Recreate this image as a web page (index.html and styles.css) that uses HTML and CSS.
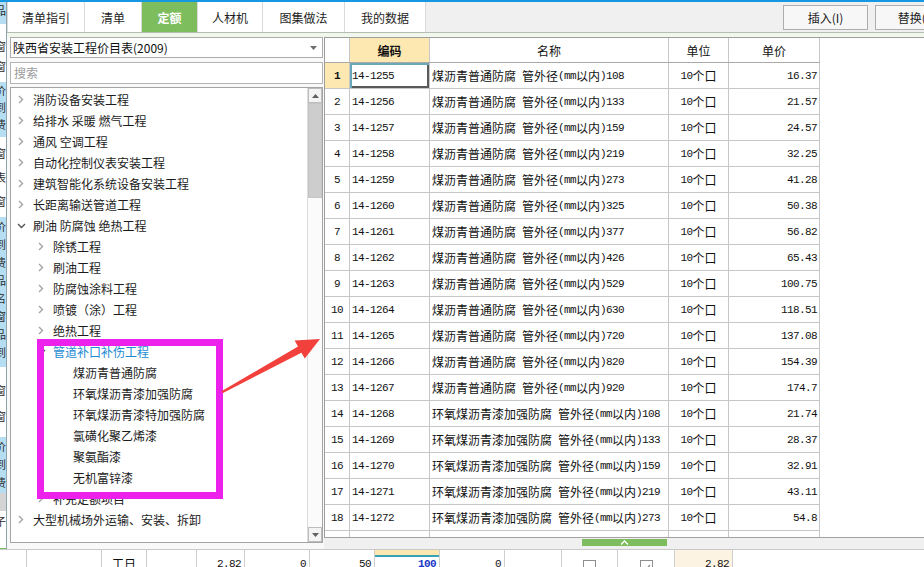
FILE: index.html
```html
<!DOCTYPE html>
<html lang="zh-CN">
<head>
<meta charset="utf-8">
<title>定额查询</title>
<link rel="stylesheet" href="styles.css">
</head>
<body>
<div class="app">
  <div class="upper">
    <div class="edge">
      <div class="seg blue s1"><span>品</span></div>
      <div class="seg s2"><span>窗</span><span>窗</span></div>
      <div class="seg blue s3"><span>价</span><span>到</span><span>费</span></div>
      <div class="seg s4"><span>窗</span><span>表</span><span>窗</span></div>
      <div class="seg blue s5"><span>价</span><span>到</span><span>费</span><span>品</span><span>名</span><span>窗</span><span>品</span><span>到</span></div>
      <div class="seg s6"><span>窗</span><span>窗</span></div>
      <div class="seg blue s7"><span>价</span><span>到</span><span>费</span></div>
      <div class="seg grey s8"></div>
      <div class="seg s9"><span>子</span></div>
    </div>
    <div class="main">
      <div class="topbar">
        <div class="tabs">
          <div class="tab w1">清单指引</div>
          <div class="tab w2">清单</div>
          <div class="tab w3 active">定额</div>
          <div class="tab w4">人材机</div>
          <div class="tab w5">图集做法</div>
          <div class="tab w6">我的数据</div>
        </div>
        <div class="actions">
          <button class="btn">插入(I)</button>
          <button class="btn">替换(R)</button>
        </div>
      </div>
      <div class="gap"></div>
      <div class="content">
        <div class="left">
          <div class="select">
            <span>陕西省安装工程价目表(2009)</span>
            <svg class="caret" width="7" height="4" viewBox="0 0 7 4"><path d="M0 0H7L3.5 4Z" fill="#6d6d6d"/></svg>
          </div>
          <div class="search">搜索</div>
          <div class="tree">
            <ul class="nodes">
              <li class="node l1"><span class="tw"><svg width="6" height="9" viewBox="0 0 6 9"><path d="M1 1L4.5 4.5L1 8" fill="none" stroke="#a3a3a3" stroke-width="1.4"/></svg></span>消防设备安装工程</li>
              <li class="node l1"><span class="tw"><svg width="6" height="9" viewBox="0 0 6 9"><path d="M1 1L4.5 4.5L1 8" fill="none" stroke="#a3a3a3" stroke-width="1.4"/></svg></span>给排水 采暖 燃气工程</li>
              <li class="node l1"><span class="tw"><svg width="6" height="9" viewBox="0 0 6 9"><path d="M1 1L4.5 4.5L1 8" fill="none" stroke="#a3a3a3" stroke-width="1.4"/></svg></span>通风 空调工程</li>
              <li class="node l1"><span class="tw"><svg width="6" height="9" viewBox="0 0 6 9"><path d="M1 1L4.5 4.5L1 8" fill="none" stroke="#a3a3a3" stroke-width="1.4"/></svg></span>自动化控制仪表安装工程</li>
              <li class="node l1"><span class="tw"><svg width="6" height="9" viewBox="0 0 6 9"><path d="M1 1L4.5 4.5L1 8" fill="none" stroke="#a3a3a3" stroke-width="1.4"/></svg></span>建筑智能化系统设备安装工程</li>
              <li class="node l1"><span class="tw"><svg width="6" height="9" viewBox="0 0 6 9"><path d="M1 1L4.5 4.5L1 8" fill="none" stroke="#a3a3a3" stroke-width="1.4"/></svg></span>长距离输送管道工程</li>
              <li class="node l1"><span class="tw"><svg class="down" width="9" height="6" viewBox="0 0 9 6"><path d="M1 1L4.5 4.5L8 1" fill="none" stroke="#555" stroke-width="1.4"/></svg></span>刷油 防腐蚀 绝热工程</li>
              <li class="node l2"><span class="tw"><svg width="6" height="9" viewBox="0 0 6 9"><path d="M1 1L4.5 4.5L1 8" fill="none" stroke="#a3a3a3" stroke-width="1.4"/></svg></span>除锈工程</li>
              <li class="node l2"><span class="tw"><svg width="6" height="9" viewBox="0 0 6 9"><path d="M1 1L4.5 4.5L1 8" fill="none" stroke="#a3a3a3" stroke-width="1.4"/></svg></span>刷油工程</li>
              <li class="node l2"><span class="tw"><svg width="6" height="9" viewBox="0 0 6 9"><path d="M1 1L4.5 4.5L1 8" fill="none" stroke="#a3a3a3" stroke-width="1.4"/></svg></span>防腐蚀涂料工程</li>
              <li class="node l2"><span class="tw"><svg width="6" height="9" viewBox="0 0 6 9"><path d="M1 1L4.5 4.5L1 8" fill="none" stroke="#a3a3a3" stroke-width="1.4"/></svg></span>喷镀（涂）工程</li>
              <li class="node l2"><span class="tw"><svg width="6" height="9" viewBox="0 0 6 9"><path d="M1 1L4.5 4.5L1 8" fill="none" stroke="#a3a3a3" stroke-width="1.4"/></svg></span>绝热工程</li>
              <li class="node l2 sel"><span class="tw"><svg class="down" width="9" height="6" viewBox="0 0 9 6"><path d="M1 1L4.5 4.5L8 1" fill="none" stroke="#555" stroke-width="1.4"/></svg></span>管道补口补伤工程</li>
              <li class="node l3"><span class="tw"></span>煤沥青普通防腐</li>
              <li class="node l3"><span class="tw"></span>环氧煤沥青漆加强防腐</li>
              <li class="node l3"><span class="tw"></span>环氧煤沥青漆特加强防腐</li>
              <li class="node l3"><span class="tw"></span>氯磺化聚乙烯漆</li>
              <li class="node l3"><span class="tw"></span>聚氨酯漆</li>
              <li class="node l3"><span class="tw"></span>无机富锌漆</li>
              <li class="node l2"><span class="tw"><svg width="6" height="9" viewBox="0 0 6 9"><path d="M1 1L4.5 4.5L1 8" fill="none" stroke="#a3a3a3" stroke-width="1.4"/></svg></span>补充定额项目</li>
              <li class="node l1"><span class="tw"><svg width="6" height="9" viewBox="0 0 6 9"><path d="M1 1L4.5 4.5L1 8" fill="none" stroke="#a3a3a3" stroke-width="1.4"/></svg></span>大型机械场外运输、安装、拆卸</li>
            </ul>
            <div class="vscroll">
              <div class="sb-btn"><svg width="7" height="4" viewBox="0 0 7 4"><path d="M0 4H7L3.5 0Z" fill="#606060"/></svg></div>
              <div class="thumb"></div>
              <div class="track"></div>
              <div class="sb-btn"><svg width="7" height="4" viewBox="0 0 7 4"><path d="M0 0H7L3.5 4Z" fill="#606060"/></svg></div>
            </div>
          </div>
        </div>
        <div class="right">
          <div class="grid">
            <div class="grow ghead">
              <div class="c c-no"></div>
              <div class="c c-code hl">编码</div>
              <div class="c c-name">名称</div>
              <div class="c c-unit">单位</div>
              <div class="c c-price">单价</div>
            </div>
            <div class="grow">
              <div class="c c-no cur a">1</div>
              <div class="c c-code focus"><span class="a">14-1255</span></div>
              <div class="c c-name">煤沥青普通防腐<span class="a"> </span>管外径<span class="a">(mm</span>以内<span class="a">)108</span></div>
              <div class="c c-unit"><span class="a">10</span>个口</div>
              <div class="c c-price a">16.37</div>
            </div>
            <div class="grow">
              <div class="c c-no a">2</div>
              <div class="c c-code"><span class="a">14-1256</span></div>
              <div class="c c-name">煤沥青普通防腐<span class="a"> </span>管外径<span class="a">(mm</span>以内<span class="a">)133</span></div>
              <div class="c c-unit"><span class="a">10</span>个口</div>
              <div class="c c-price a">21.57</div>
            </div>
            <div class="grow">
              <div class="c c-no a">3</div>
              <div class="c c-code"><span class="a">14-1257</span></div>
              <div class="c c-name">煤沥青普通防腐<span class="a"> </span>管外径<span class="a">(mm</span>以内<span class="a">)159</span></div>
              <div class="c c-unit"><span class="a">10</span>个口</div>
              <div class="c c-price a">24.57</div>
            </div>
            <div class="grow">
              <div class="c c-no a">4</div>
              <div class="c c-code"><span class="a">14-1258</span></div>
              <div class="c c-name">煤沥青普通防腐<span class="a"> </span>管外径<span class="a">(mm</span>以内<span class="a">)219</span></div>
              <div class="c c-unit"><span class="a">10</span>个口</div>
              <div class="c c-price a">32.25</div>
            </div>
            <div class="grow">
              <div class="c c-no a">5</div>
              <div class="c c-code"><span class="a">14-1259</span></div>
              <div class="c c-name">煤沥青普通防腐<span class="a"> </span>管外径<span class="a">(mm</span>以内<span class="a">)273</span></div>
              <div class="c c-unit"><span class="a">10</span>个口</div>
              <div class="c c-price a">41.28</div>
            </div>
            <div class="grow">
              <div class="c c-no a">6</div>
              <div class="c c-code"><span class="a">14-1260</span></div>
              <div class="c c-name">煤沥青普通防腐<span class="a"> </span>管外径<span class="a">(mm</span>以内<span class="a">)325</span></div>
              <div class="c c-unit"><span class="a">10</span>个口</div>
              <div class="c c-price a">50.38</div>
            </div>
            <div class="grow">
              <div class="c c-no a">7</div>
              <div class="c c-code"><span class="a">14-1261</span></div>
              <div class="c c-name">煤沥青普通防腐<span class="a"> </span>管外径<span class="a">(mm</span>以内<span class="a">)377</span></div>
              <div class="c c-unit"><span class="a">10</span>个口</div>
              <div class="c c-price a">56.82</div>
            </div>
            <div class="grow">
              <div class="c c-no a">8</div>
              <div class="c c-code"><span class="a">14-1262</span></div>
              <div class="c c-name">煤沥青普通防腐<span class="a"> </span>管外径<span class="a">(mm</span>以内<span class="a">)426</span></div>
              <div class="c c-unit"><span class="a">10</span>个口</div>
              <div class="c c-price a">65.43</div>
            </div>
            <div class="grow">
              <div class="c c-no a">9</div>
              <div class="c c-code"><span class="a">14-1263</span></div>
              <div class="c c-name">煤沥青普通防腐<span class="a"> </span>管外径<span class="a">(mm</span>以内<span class="a">)529</span></div>
              <div class="c c-unit"><span class="a">10</span>个口</div>
              <div class="c c-price a">100.75</div>
            </div>
            <div class="grow">
              <div class="c c-no a">10</div>
              <div class="c c-code"><span class="a">14-1264</span></div>
              <div class="c c-name">煤沥青普通防腐<span class="a"> </span>管外径<span class="a">(mm</span>以内<span class="a">)630</span></div>
              <div class="c c-unit"><span class="a">10</span>个口</div>
              <div class="c c-price a">118.51</div>
            </div>
            <div class="grow">
              <div class="c c-no a">11</div>
              <div class="c c-code"><span class="a">14-1265</span></div>
              <div class="c c-name">煤沥青普通防腐<span class="a"> </span>管外径<span class="a">(mm</span>以内<span class="a">)720</span></div>
              <div class="c c-unit"><span class="a">10</span>个口</div>
              <div class="c c-price a">137.08</div>
            </div>
            <div class="grow">
              <div class="c c-no a">12</div>
              <div class="c c-code"><span class="a">14-1266</span></div>
              <div class="c c-name">煤沥青普通防腐<span class="a"> </span>管外径<span class="a">(mm</span>以内<span class="a">)820</span></div>
              <div class="c c-unit"><span class="a">10</span>个口</div>
              <div class="c c-price a">154.39</div>
            </div>
            <div class="grow">
              <div class="c c-no a">13</div>
              <div class="c c-code"><span class="a">14-1267</span></div>
              <div class="c c-name">煤沥青普通防腐<span class="a"> </span>管外径<span class="a">(mm</span>以内<span class="a">)920</span></div>
              <div class="c c-unit"><span class="a">10</span>个口</div>
              <div class="c c-price a">174.7</div>
            </div>
            <div class="grow">
              <div class="c c-no a">14</div>
              <div class="c c-code"><span class="a">14-1268</span></div>
              <div class="c c-name">环氧煤沥青漆加强防腐<span class="a"> </span>管外径<span class="a">(mm</span>以内<span class="a">)108</span></div>
              <div class="c c-unit"><span class="a">10</span>个口</div>
              <div class="c c-price a">21.74</div>
            </div>
            <div class="grow">
              <div class="c c-no a">15</div>
              <div class="c c-code"><span class="a">14-1269</span></div>
              <div class="c c-name">环氧煤沥青漆加强防腐<span class="a"> </span>管外径<span class="a">(mm</span>以内<span class="a">)133</span></div>
              <div class="c c-unit"><span class="a">10</span>个口</div>
              <div class="c c-price a">28.37</div>
            </div>
            <div class="grow">
              <div class="c c-no a">16</div>
              <div class="c c-code"><span class="a">14-1270</span></div>
              <div class="c c-name">环氧煤沥青漆加强防腐<span class="a"> </span>管外径<span class="a">(mm</span>以内<span class="a">)159</span></div>
              <div class="c c-unit"><span class="a">10</span>个口</div>
              <div class="c c-price a">32.91</div>
            </div>
            <div class="grow">
              <div class="c c-no a">17</div>
              <div class="c c-code"><span class="a">14-1271</span></div>
              <div class="c c-name">环氧煤沥青漆加强防腐<span class="a"> </span>管外径<span class="a">(mm</span>以内<span class="a">)219</span></div>
              <div class="c c-unit"><span class="a">10</span>个口</div>
              <div class="c c-price a">43.11</div>
            </div>
            <div class="grow">
              <div class="c c-no a">18</div>
              <div class="c c-code"><span class="a">14-1272</span></div>
              <div class="c c-name">环氧煤沥青漆加强防腐<span class="a"> </span>管外径<span class="a">(mm</span>以内<span class="a">)273</span></div>
              <div class="c c-unit"><span class="a">10</span>个口</div>
              <div class="c c-price a">54.8</div>
            </div>
            <div class="grow">
              <div class="c c-no"></div>
              <div class="c c-code"></div>
              <div class="c c-name"></div>
              <div class="c c-unit"></div>
              <div class="c c-price"></div>
            </div>
          </div>
          <div class="splitter">
            <div class="grip"><svg width="9" height="5" viewBox="0 0 9 5"><path d="M1 4.5L4.5 1L8 4.5" fill="none" stroke="#fff" stroke-width="1.3"/></svg></div>
          </div>
        </div>
      </div>
    </div>
  </div>
  <div class="bottom">
    <div class="b bw1"></div>
    <div class="b bw2"></div>
    <div class="b bw3 mid">工日</div>
    <div class="b bw4"></div>
    <div class="b bw5 num">2.82</div>
    <div class="b bw6 num">0</div>
    <div class="b bw7 num">50</div>
    <div class="b bw8 num strong">100</div>
    <div class="b bw9 num">0</div>
    <div class="b bw10"></div>
    <div class="b bw11"><span class="cb"></span></div>
    <div class="b bw12"><span class="cb on"><svg width="9" height="7" viewBox="0 0 9 7"><path d="M1 3.5L3.5 6L8 1" fill="none" stroke="#8a8a8a" stroke-width="1.2"/></svg></span></div>
    <div class="b bw13 num beige">2.82</div>
    <div class="b bw14"></div>
  </div>
  <div class="mark"></div>
  <svg class="arrow" width="924" height="567" viewBox="0 0 924 567">
    <polygon points="221,389.5 223,391 301.4,350.8 304.8,356.6 320,337 294.6,338.6 298,344.4" fill="#f2403c"/>
  </svg>
</div>
</body>
</html>
```

FILE: styles.css
```css
* { box-sizing: border-box; }

body {
  margin: 0;
  background: #ffffff;
  font-family: "Noto Sans CJK SC", "Noto Sans", sans-serif;
  font-size: 12px;
  color: #1b1b1b;
}

.app {
  position: relative;
  width: 924px;
  height: 567px;
  overflow: hidden;
  border-top: 2px solid #1698e0;
  display: flex;
  flex-direction: column;
  background: #ffffff;
}

.upper {
  display: flex;
  height: 547px;
  flex: none;
}

/* clipped window behind, on the far left */
.edge {
  width: 7px;
  flex: none;
  display: flex;
  flex-direction: column;
  overflow: hidden;
  border-right: 1px solid #8fa3ad;
}
.seg {
  display: flex;
  flex-direction: column;
  overflow: hidden;
  background: #ffffff;
  line-height: 17px;
  font-size: 11px;
  color: #2d2d2d;
}
.seg span { margin-left: -5px; display: block; }
.seg.blue { background: #b6def3; }
.seg.grey { background: #d4d4d4; }
.s1 { height: 22px; }
.s2 { height: 58px; padding-top: 12px; line-height: 20px; }
.s3 { height: 55px; }
.s4 { height: 80px; padding-top: 4px; line-height: 24px; }
.s5 { height: 150px; line-height: 18px; }
.s6 { height: 70px; padding-top: 10px; line-height: 26px; }
.s7 { height: 56px; line-height: 18px; }
.s8 { height: 18px; }
.s9 { flex: 1; padding-top: 2px; border-bottom: 1px solid #7dbd5d; }

.main {
  width: 917px;
  flex: none;
  display: flex;
  flex-direction: column;
}

/* top tab bar */
.topbar {
  height: 31px;
  flex: none;
  display: flex;
  background: #f0f0f0;
  border-bottom: 1px solid #b5bcb1;
  overflow: hidden;
}
.tabs { display: flex; flex: none; }
.tab {
  height: 30px;
  background: #ffffff;
  border-right: 1px solid #dadada;
  display: flex;
  align-items: center;
  justify-content: center;
  color: #1e1e1e;
  font-size: 12px;
}
.tab.active {
  background: #7dbd5d;
  color: #ffffff;
  font-weight: bold;
}
.w1 { width: 78px; border-left: 1px solid #dadada; }
.w2 { width: 57px; }
.w3 { width: 56px; }
.w4 { width: 65px; }
.w5 { width: 82px; }
.w6 { width: 81px; }

.actions {
  display: flex;
  gap: 7px;
  margin-left: 357px;
  padding-top: 3px;
  flex: none;
}
.btn {
  width: 85px;
  height: 25px;
  flex: none;
  padding: 0;
  border: 1px solid #adadad;
  background: #f7f7f7;
  font-family: "Noto Sans CJK SC", sans-serif;
  font-size: 12px;
  color: #1b1b1b;
}

.gap {
  height: 4px;
  flex: none;
  background: #f1f7ed;
}

.content {
  display: flex;
  height: 512px;
  flex: none;
}

/* left: library selector + tree */
.left {
  width: 317px;
  flex: none;
  padding: 0 1px 0 3px;
  background: #f9f9f9;
}
.select {
  height: 21px;
  border: 1px solid #acacac;
  background: #ffffff;
  display: flex;
  align-items: center;
  justify-content: space-between;
  padding: 0 5px 0 2px;
  color: #111;
}
.search {
  height: 22px;
  margin-top: 4px;
  border: 1px solid #b4b4b4;
  background: #ffffff;
  color: #9c9c9c;
  padding-left: 3px;
  line-height: 20px;
}
.tree {
  height: 456px;
  margin-top: 3px;
  border: 1px solid #a4a4a4;
  background: #ffffff;
  display: flex;
}
.nodes {
  flex: 1;
  list-style: none;
  margin: 0;
  padding: 1px 0 0;
}
.node {
  height: 21px;
  display: flex;
  align-items: center;
  white-space: nowrap;
  color: #1b1b1b;
}
.node.l1 { padding-left: 7px; }
.node.l2 { padding-left: 27px; }
.node.l3 { padding-left: 47px; }
.node.sel { color: #1d8ad2; }
.tw {
  width: 15px;
  flex: none;
  display: flex;
  align-items: center;
}
.tw .down { margin-left: -1px; }

.vscroll {
  width: 15px;
  flex: none;
  display: flex;
  flex-direction: column;
  background: #fbfbfb;
  border-left: 1px solid #dcdcdc;
}
.sb-btn {
  height: 15px;
  flex: none;
  display: flex;
  align-items: center;
  justify-content: center;
  border: 1px solid #bdbdbd;
  background: #f4f4f4;
}
.thumb {
  height: 95px;
  flex: none;
  background: #cdcdcd;
  border: 1px solid #c4c4c4;
}
.track { flex: 1; }

/* right: result grid */
.right {
  width: 600px;
  flex: none;
  display: flex;
  flex-direction: column;
}
.grid {
  height: 501px;
  flex: none;
  border-top: 1px solid #9d9d9d;
  border-left: 1px solid #9d9d9d;
  border-bottom: 1px solid #a3a3a3;
  overflow: hidden;
  background: #ffffff;
}
.grow {
  display: flex;
  width: 495px;
  height: 26px;
  border-bottom: 1px solid #c7c7c7;
}
.grow.ghead {
  height: 25px;
  border-bottom-color: #a9a9a9;
}
.c {
  flex: none;
  display: flex;
  align-items: center;
  white-space: nowrap;
  overflow: hidden;
  border-right: 1px solid #c7c7c7;
  color: #111;
}
.c-no { width: 25px; justify-content: center; }
.c-code { width: 80px; padding-left: 2px; }
.c-name { width: 239px; padding-left: 2px; }
.c-unit { width: 60px; justify-content: center; }
.c-price { width: 91px; justify-content: flex-end; padding-right: 2px; }
.ghead .c { justify-content: center; padding: 0; }
.ghead .hl { background: #fde8b2; font-weight: bold; }
.c.cur { background: #fde8b2; font-weight: bold; }
.c.focus {
  box-shadow: inset 2px 2px 0 #6aa7b8, inset -2px -2px 0 #5a5a5a;
}

.a {
  font-family: "Liberation Mono", monospace;
  font-size: 11px;
  letter-spacing: -0.6px;
  white-space: pre;
}
.c.a { font-family: "Liberation Mono", monospace; font-size: 11px; letter-spacing: -0.6px; }

.splitter {
  height: 11px;
  flex: none;
  background: #f0f0f0;
  padding-top: 1px;
}
.grip {
  margin-left: 258px;
  width: 85px;
  height: 7px;
  background: #7dbd5d;
  display: flex;
  align-items: center;
  justify-content: center;
}

/* lower grid peeking in */
.bottom {
  height: 18px;
  flex: none;
  display: flex;
  border-top: 1px solid #c9c9c9;
  background: #ffffff;
}
.b {
  flex: none;
  height: 17px;
  border-right: 1px solid #cfcfcf;
  padding-top: 6px;
  line-height: 16px;
  font-size: 12px;
  color: #111;
  overflow: hidden;
}
.b.mid { text-align: center; }
.b.num {
  text-align: right;
  padding-right: 3px;
  font-family: "Liberation Mono", monospace;
  font-size: 11px;
  letter-spacing: -0.6px;
}
.b.strong {
  color: #1838c8;
  font-weight: bold;
  background: linear-gradient(#fde8b2 0 5px, #3aa2b6 5px 7px, #ffffff 7px);
}
.b.beige { background: #fcf3e2; }
.bw1 { width: 27px; }
.bw2 { width: 75px; }
.bw3 { width: 45px; }
.bw4 { width: 50px; }
.bw5 { width: 48px; }
.bw6 { width: 65px; }
.bw7 { width: 65px; }
.bw8 { width: 65px; }
.bw9 { width: 65px; }
.bw10 { width: 57px; }
.bw11 { width: 56px; display: flex; justify-content: center; }
.bw12 { width: 57px; display: flex; justify-content: center; }
.bw13 { width: 58px; }
.bw14 { flex: 1; border-right: 0; }
.cb {
  display: flex;
  justify-content: center;
  padding-top: 3px;
  width: 13px;
  height: 13px;
  margin-top: 4px;
  border: 1px solid #8e8e8e;
  background: #ffffff;
}

/* annotation overlay */
.mark {
  position: absolute;
  left: 37px;
  top: 337px;
  width: 186px;
  height: 160px;
  border: 7px solid #ec21ec;
}
.arrow {
  position: absolute;
  left: 0;
  top: 0;
  pointer-events: none;
}
```
